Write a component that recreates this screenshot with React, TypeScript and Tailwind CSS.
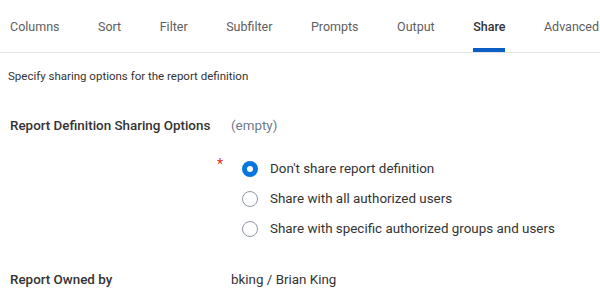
import React, { useState } from 'react';

const tabs = ['Columns', 'Sort', 'Filter', 'Subfilter', 'Prompts', 'Output', 'Share', 'Advanced'];

const options = [
	"Don't share report definition",
	'Share with all authorized users',
	'Share with specific authorized groups and users',
];

const App: React.FC = () => {
	const [active] = useState('Share');
	const [choice, setChoice] = useState(0);

	return (
		<main className="w-[600px] h-[303px] overflow-hidden bg-white text-[#333333] font-['Roboto',sans-serif]">
			<nav className="flex gap-[38.5px] pl-[10px] border-b border-[#e3e3e3] whitespace-nowrap">
				{tabs.map((tab) => (
					<div
						key={tab}
						className={`pt-[19px] pb-[13px] border-b-4 text-[12.5px] leading-[16px] shrink-0 ${
							tab === active
								? 'border-[#0b5fc4] text-[#333333] font-medium'
								: 'border-transparent text-[#5e5e5e]'
						}`}
					>
						{tab}
					</div>
				))}
			</nav>

			<p className="mt-[16px] pl-[8px] text-[11.5px] leading-[14px] text-[#333333]">
				Specify sharing options for the report definition
			</p>

			<div className="mt-[35px] flex text-[13.4px] leading-[16px]">
				<div className="w-[231px] pl-[10px] font-medium text-[#333333]">Report Definition Sharing Options</div>
				<div className="text-[#6b7a8c]">(empty)</div>
			</div>

			<div className="mt-[20px] flex pl-[217px]">
				<span className="w-[25px] text-[#e0301e] text-[14px] leading-[16px] pt-[2px]">*</span>
				<div className="flex flex-col">
					{options.map((opt, idx) => (
						<label
							key={opt}
							className="flex items-center h-[30px] gap-[12px] cursor-pointer text-[13.4px] text-[#333333]"
							onClick={() => setChoice(idx)}
						>
							<span
								className={`w-[16px] h-[16px] rounded-full bg-white ${
									choice === idx ? 'border-[5px] border-[#0875e1]' : 'border-[1.5px] border-[#8f99a3]'
								}`}
							/>
							{opt}
						</label>
					))}
				</div>
			</div>

			<div className="mt-[28px] flex text-[13.4px] leading-[16px]">
				<div className="w-[231px] pl-[10px] font-medium text-[#333333]">Report Owned by</div>
				<div className="text-[#333333]">bking / Brian King</div>
			</div>
		</main>
	);
};

export default App;
